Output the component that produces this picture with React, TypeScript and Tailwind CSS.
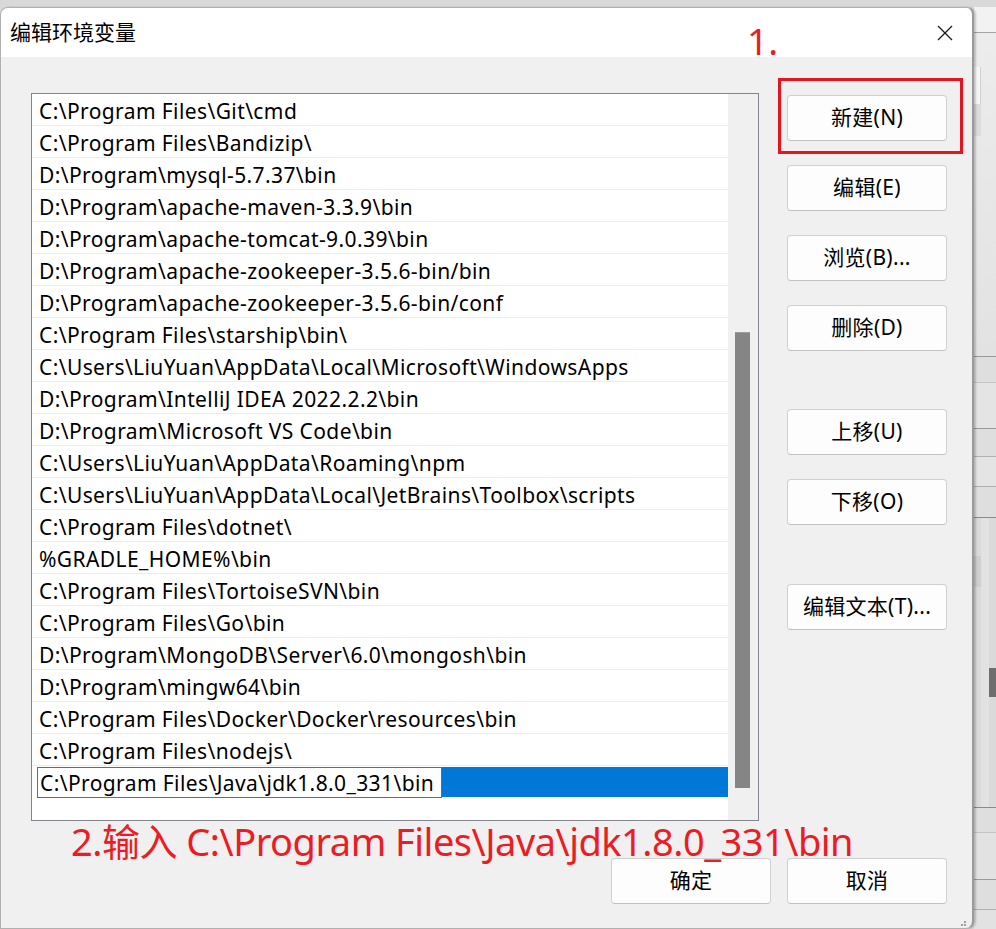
import React from "react";

const rows: string[] = [
  "C:\\Program Files\\Git\\cmd",
  "C:\\Program Files\\Bandizip\\",
  "D:\\Program\\mysql-5.7.37\\bin",
  "D:\\Program\\apache-maven-3.3.9\\bin",
  "D:\\Program\\apache-tomcat-9.0.39\\bin",
  "D:\\Program\\apache-zookeeper-3.5.6-bin/bin",
  "D:\\Program\\apache-zookeeper-3.5.6-bin/conf",
  "C:\\Program Files\\starship\\bin\\",
  "C:\\Users\\LiuYuan\\AppData\\Local\\Microsoft\\WindowsApps",
  "D:\\Program\\IntelliJ IDEA 2022.2.2\\bin",
  "D:\\Program\\Microsoft VS Code\\bin",
  "C:\\Users\\LiuYuan\\AppData\\Roaming\\npm",
  "C:\\Users\\LiuYuan\\AppData\\Local\\JetBrains\\Toolbox\\scripts",
  "C:\\Program Files\\dotnet\\",
  "%GRADLE_HOME%\\bin",
  "C:\\Program Files\\TortoiseSVN\\bin",
  "C:\\Program Files\\Go\\bin",
  "D:\\Program\\MongoDB\\Server\\6.0\\mongosh\\bin",
  "D:\\Program\\mingw64\\bin",
  "C:\\Program Files\\Docker\\Docker\\resources\\bin",
  "C:\\Program Files\\nodejs\\",
];

function Btn({ label, className = "" }: { label: string; className?: string }) {
  return (
    <div
      className={
        "w-[160px] h-[46px] rounded-[4px] border border-[#d0d0d0] border-b-[#c2c2c2] bg-[#fdfdfd] flex items-center justify-center text-[21px] tracking-[0.3px] text-black " +
        className
      }
    >
      {label}
    </div>
  );
}

export default function App() {
  return (
    <div className="w-[996px] h-[929px] overflow-hidden bg-[#d9d9d9] flex flex-col font-['Noto_Sans','Noto_Sans_CJK_SC',sans-serif] text-black">
      <div className="h-[7px] shrink-0" />
      <div className="flex flex-1 min-h-0">
        {/* Dialog */}
        <div className="relative w-[974px] shrink-0 flex flex-col border border-[#b0b0b0] border-r-[#9a9a9a] border-r-2 rounded-t-[8px] rounded-br-[8px] bg-[#f0f0f0] overflow-hidden shadow-[2px_0_2px_rgba(0,0,0,0.2)]">
          {/* Title bar */}
          <div className="h-[49px] shrink-0 bg-white flex items-center pl-[9px] pr-[19px]">
            <span className="text-[21px] leading-none">编辑环境变量</span>
            <div className="flex-1" />
            <svg width="16" height="16" viewBox="0 0 16 16">
              <path d="M1 1 L15 15 M15 1 L1 15" stroke="#1a1a1a" strokeWidth="1.3" />
            </svg>
          </div>

          {/* Body */}
          <div className="flex-1 flex flex-col pl-[30px] pr-[25px] pt-[36px]">
            <div className="flex">
              {/* List box */}
              <div className="w-[728px] h-[728px] border border-[#84848e] bg-white flex">
                <div className="flex-1 flex flex-col">
                  {rows.map((r, i) => (
                    <div
                      key={i}
                      className="h-[32px] border-b border-[#ececec] flex items-center pl-[7px] pt-[3px] text-[21px] tracking-[0.4px] leading-none whitespace-nowrap"
                    >
                      {r}
                    </div>
                  ))}
                  <div className="h-[32px] flex items-start pt-[1px]">
                    <div className="w-[5px]" />
                    <div className="w-[405px] h-[31px] border border-[#6a6a6a] bg-white flex items-center pl-[2px] pt-[2px] text-[21px] tracking-[0.4px] leading-none whitespace-nowrap">
                      C:\Program Files\Java\jdk1.8.0_331\bin
                    </div>
                    <div className="flex-1 h-[30px] bg-[#0078d7]" />
                  </div>
                </div>
                <div className="w-[30px] bg-[#f0f0f0] flex flex-col pl-[7px] pt-[238px]">
                  <div className="w-[15px] h-[456px] bg-[#858585] border-t border-[#9d9d9d]" />
                </div>
              </div>

              {/* Button column */}
              <div className="ml-[28px] flex flex-col pt-[2px]">
                <Btn label="新建(N)" />
                <Btn label="编辑(E)" className="mt-[24px]" />
                <Btn label="浏览(B)..." className="mt-[24px]" />
                <Btn label="删除(D)" className="mt-[24px]" />
                <Btn label="上移(U)" className="mt-[58px]" />
                <Btn label="下移(O)" className="mt-[24px]" />
                <Btn label="编辑文本(T)..." className="mt-[59px]" />
              </div>
            </div>

            <div className="mt-[37px] flex justify-end gap-[16px]">
              <Btn label="确定" className="border-[#0067c0] border-b-[#0067c0]" />
              <Btn label="取消" />
            </div>
          </div>

          {/* resize grip */}
          <div className="absolute right-[6px] bottom-[2px] grid grid-cols-2 gap-[1px]">
            <div className="w-[2px] h-[2px]" />
            <div className="w-[2px] h-[2px] bg-[#a0a0a0]" />
            <div className="w-[2px] h-[2px] bg-[#a0a0a0]" />
            <div className="w-[2px] h-[2px] bg-[#a0a0a0]" />
          </div>

          {/* Annotations */}
          <div className="absolute left-[746px] top-[14px] text-[37px] leading-none text-[#ec1c24]">1.</div>
          <div className="absolute left-[777px] top-[70px] w-[185px] h-[76px] border-[3px] border-[#e5141f]" />
          <div className="absolute left-[70px] top-[814px] text-[38px] tracking-[-0.5px] leading-none text-[#ec1c24] whitespace-nowrap">
            2.输入 C:\Program Files\Java\jdk1.8.0_331\bin
          </div>
        </div>

        {/* Background window strip */}
        <div className="flex-1 flex flex-col bg-[#e4e4e4]">
          <div className="h-[26px] bg-[#f2f2f2] border-b border-[#a4a4a4]" />
          <div className="h-[323px] flex bg-gradient-to-b from-[#ececec] to-[#e2e2e2]">
            <div className="w-[7px] flex flex-col pt-[34px]">
              <div className="h-[37px] bg-[#f6f6f6] border-r border-[#d0d0d0]" />
              <div className="h-[32px] bg-[#dcdcdc]" />
            </div>
          </div>
          <div className="h-[26px] border-t border-[#9a9a9a] bg-[#dedede]" />
          <div className="h-[46px] border-t border-[#c4c4c4] bg-[#e4e4e4]" />
          <div className="h-[28px] border-t border-[#9a9a9a] bg-[#dedede]" />
          <div className="h-[30px] border-t border-[#b0b0b0] bg-[#e4e4e4]" />
          <div className="h-[31px] border-t border-[#b0b0b0] bg-[#dedede]" />
          <div className="h-[290px] border-t border-[#8a8a8a] flex bg-[#dadada]">
            <div className="w-[7px] flex flex-col pt-[38px]">
              <div className="h-[31px] bg-[#cfcfcf]" />
            </div>
            <div className="w-[8px] bg-[#e2e2e2]" />
            <div className="flex-1 flex flex-col pt-[150px]">
              <div className="h-[29px] bg-[#6e6e6e]" />
            </div>
          </div>
          <div className="h-[25px] border-t border-[#8a8a8a] bg-[#dedede]" />
          <div className="h-[47px] border-t border-[#c4c4c4] bg-[#e2e2e2]" />
          <div className="h-[30px] border-t border-[#9a9a9a] bg-[#dedede]" />
          <div className="flex-1 border-t border-[#b0b0b0] bg-[#e2e2e2]" />
        </div>
      </div>
    </div>
  );
}
